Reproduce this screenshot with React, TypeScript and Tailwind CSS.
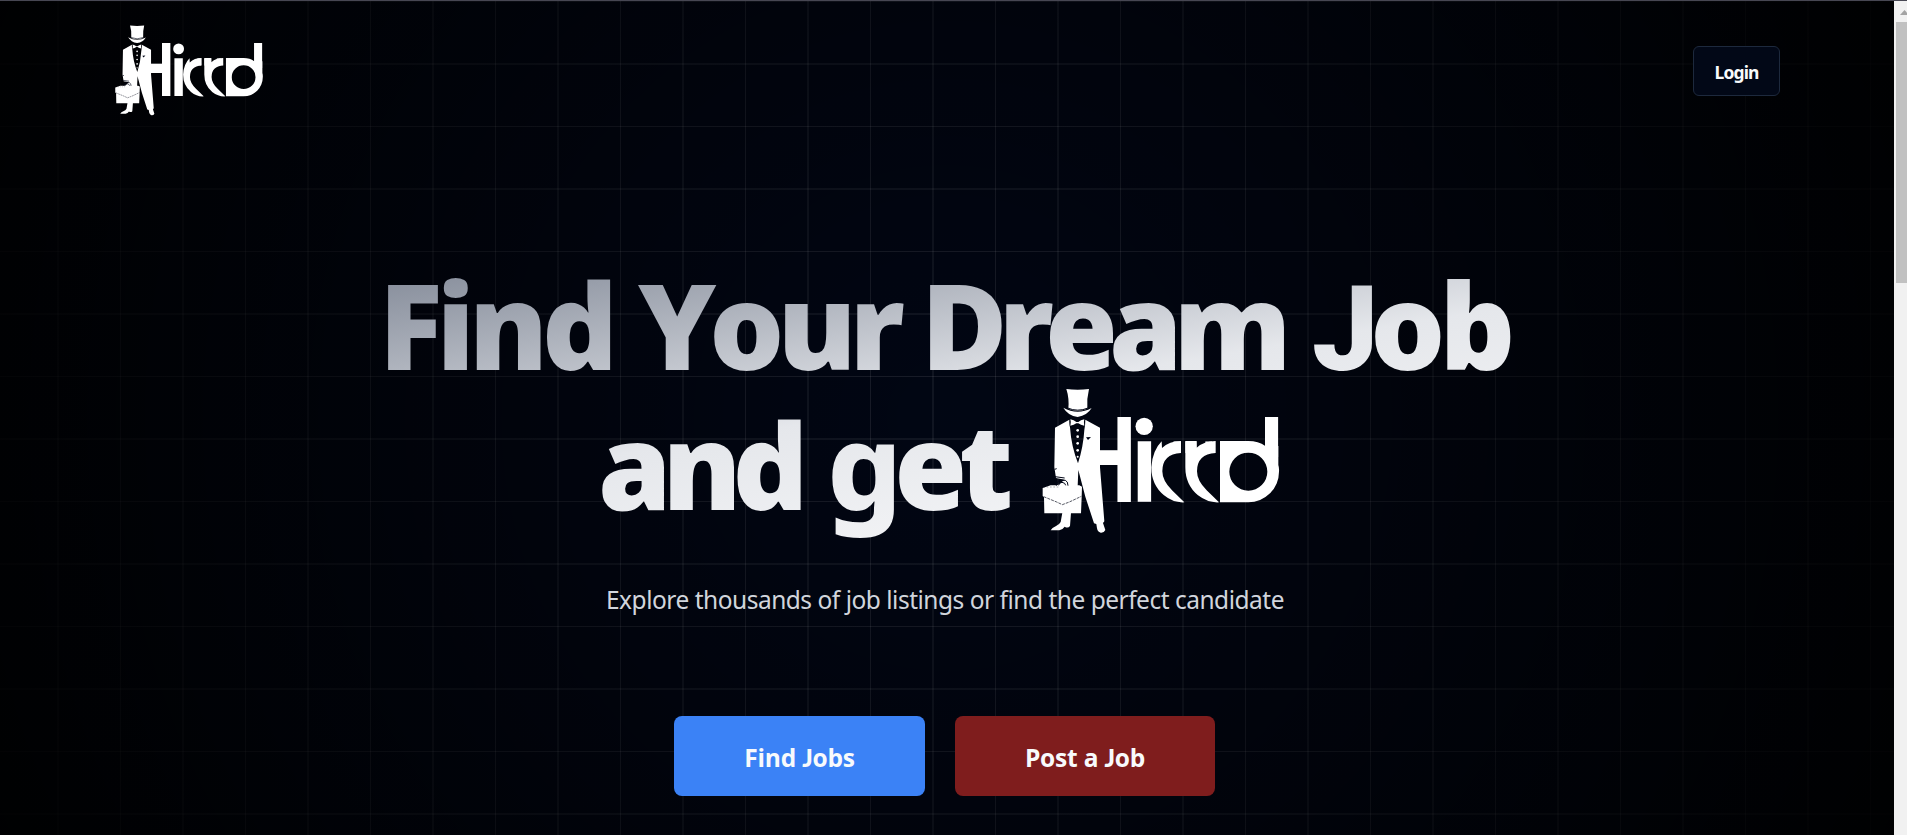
const Mark = ({ id, className }: { id: string; className: string }) => (
  <svg viewBox="0 0 780 495" className={className} fill="#fff" role="img" aria-label="Hirrd">
    <defs>
      <clipPath id={id + "-h"}>
        <rect x="200" y="111" width="120" height="256" />
      </clipPath>
      <clipPath id={id + "-i"}>
        <rect x="315" y="184" width="52" height="183" />
      </clipPath>
      <clipPath id={id + "-r"}>
        <rect x="422" y="184" width="31" height="35" />
        <rect x="466" y="184" width="34" height="36" />
        <rect x="526" y="184" width="31" height="35" />
      </clipPath>
      <clipPath id={id + "-d"}>
        <rect x="705" y="111" width="40" height="120" />
      </clipPath>
    </defs>
    {/* hat */}
    <path d="M109 27 Q143 31 177 27 Q170 55 172 86 Q143 98 115 86 Q118 55 109 27 Z" />
    <path d="M100 83 Q142 107 185 84 Q172 106 143 111 Q114 107 100 83 Z" />
    <path d="M113 84 Q143 97 174 84" fill="none" stroke="#020617" strokeWidth="3" />
    {/* bow tie */}
    <path d="M121 118 Q132 120 139 126 H145 Q152 120 163 118 Q160 127 163 137 Q152 135 145 130 H139 Q132 135 121 137 Q124 127 121 118 Z" />
    {/* suit, arm and legs */}
    <path d="M118 119 Q117 132 120 142 Q124 200 144 250 Q160 200 163 150 Q166 134 166 119 L210 143 V262 L223 424 L219 429 L226 450 Q222 459 212 458 Q203 456 201 445 L199 432 L192 430 L166 350 L145 270 L143 318 H80 L104 299 L78 294 L73 262 L75 143 Z" />
    <circle cx="143" cy="151" r="4" />
    <circle cx="143" cy="170" r="4" />
    <circle cx="143" cy="190" r="4" />
    <circle cx="143" cy="211" r="4" />
    <circle cx="143" cy="230" r="3" />
    <path d="M168 172 L183 171 L174 180 Z" fill="#020617" />
    {/* briefcase */}
    <path d="M97 398 H123 L120 438 Q114 446 104 440 Q98 449 88 451 H62 Q66 443 77 439 Q88 434 92 426 Z" />
    <path d="M38 324 L62 316 H148 L156 320 L155 352 L153 400 H43 L42 352 L38 348 Z" />
    <path d="M79 317 Q80 302 93 301 H106 Q114 304 114 317" fill="none" stroke="#020617" strokeWidth="3" />
    <path d="M86 316 Q87 308 96 307 Q106 308 107 316" fill="none" stroke="#020617" strokeWidth="3" />
    <path d="M75 290 L104 294 M74 268 L80 266" fill="none" stroke="#020617" strokeWidth="3" />
    <path d="M41 350 L80 366 L97 374 L118 366 L154 349" fill="none" stroke="#020617" strokeWidth="2" strokeDasharray="9 3" />
    <path d="M40 321 H90" fill="none" stroke="#020617" strokeWidth="1" strokeDasharray="5 5" />
    {/* wordmark */}
    <g className="font-['Liberation_Sans'] font-bold tracking-normal">
      <g clipPath={`url(#${id}-h)`}>
        <text transform="translate(121 367) scale(.7465 1)" fontSize="372">H</text>
      </g>
      <g clipPath={`url(#${id}-i)`}>
        <text transform="translate(302.7 367) scale(.836 1)" fontSize="348">i</text>
      </g>
      <g clipPath={`url(#${id}-r)`}>
        <text transform="translate(385 367) scale(.5 1)" fontSize="348">r</text>
        <text transform="translate(447 367) scale(.76 1)" fontSize="348">r</text>
      </g>
      <g clipPath={`url(#${id}-d)`}>
        <text transform="translate(587.3 367) scale(.825 1)" fontSize="353">d</text>
      </g>
    </g>
    {/* dot, swooshes and ring */}
    <circle cx="342.5" cy="139" r="26" />
    <path d="M395 184 L396 204 Q418 183 453 183 V219 Q397 222 397 274 Q397 302 426 331 L463 367 Q430 369 402 346 Q364 315 364 262 Q367 212 395 184 Z" />
    <path d="M466 183 H500 V203 Q522 183 557 183 V219 Q501 222 501 274 Q501 302 530 331 L567 367 Q534 369 504 346 Q466 315 466 262 Z" />
    <path fillRule="evenodd" d="M570 183 H655 Q685 183 706 198 H745 V255 Q748 265 747 275 A92 92 0 0 1 655 367 H570 Z M712 275 A57 57 0 1 0 598 275 A57 57 0 1 0 712 275 Z" />
  </svg>
);

/* Capital J that rests on the baseline */
const J = () => <span className="font-[Lato] font-black">J</span>;

export default function App() {
  return (
    <div className="flex h-[835px] w-full flex-col overflow-hidden border-t border-[#474753] bg-black font-['Open_Sans','Noto_Sans',sans-serif] text-slate-50">
      <div className="flex flex-1">
        <main className="flex flex-1 flex-col bg-[#010614] bg-[radial-gradient(circle_1120px_at_50%_50%,#00000008_0%,#000_100%),linear-gradient(90deg,#ffffff18_1px,transparent_1px),linear-gradient(#ffffff18_1px,transparent_1px),linear-gradient(90deg,#ffffff10_2px,transparent_2px),linear-gradient(#ffffff10_2px,transparent_2px)] bg-[position:0_0,-5px_0,0_0,57px_0,0_62px] bg-[size:100%_100%,125px_125px,125px_125px,125px_125px,125px_125px]">
          <header className="flex h-[140px] items-center justify-between pl-[107px] pr-[114px]">
            <Mark id="nav" className="h-[103px] w-[163px]" />
            <button className="h-[50px] w-[87px] rounded-md border border-slate-800 bg-[#020817] pt-0.5 font-['Noto_Sans'] text-[17.5px] font-bold tracking-[-0.9px]">Login</button>
          </header>
          <h1 className="mt-[114px] ml-[72px] h-[290px] w-[1750px] bg-gradient-to-br from-gray-500 via-gray-200 to-white bg-clip-text text-[118px] leading-[140px] font-extrabold tracking-[-6px] whitespace-nowrap text-transparent">
            <span className="flex h-[140px] pl-[307px]">
              <span className="w-[259px]">Find </span>
              <span className="w-[283px] tracking-[-7px]">Your </span>
              <span className="w-[391px] tracking-[-9px]">Dream </span>
              <span className="tracking-[-6px]"><span className="font-[Roboto] font-black tracking-[-8px]">J</span>ob</span>
            </span>
            <span className="flex h-[140px] items-start pl-[526px]">
              <span className="w-[229px] tracking-[-9px]">and </span>
              <span className="w-[203px] tracking-[-8px]"><span className="font-['Noto_Sans']">g</span>et</span>
              <Mark id="hero" className="-mt-[15px] h-[165px] w-[260px] shrink-0" />
            </span>
          </h1>
          <p className="mt-[37px] pr-[4px] text-center font-['Noto_Sans'] text-[24.5px] leading-9 tracking-[-0.49px] text-gray-300">Explore thousands of job listings or find the perfect candidate</p>
          <div className="mt-[98px] flex justify-center gap-[30px] pr-[5px] text-[24.5px] font-bold tracking-[-0.2px]">
            <button className="h-20 w-[251px] rounded-lg bg-[#3b82f6] pt-1">Find <J />obs</button>
            <button className="h-20 w-[260px] rounded-lg bg-[#7f1d1d] pt-1">Post a <J />ob</button>
          </div>
        </main>
        <aside className="flex w-[13px] flex-col items-end overflow-hidden bg-[#f1f1f1]">
          <svg viewBox="0 0 7 21" className="h-[21px] w-[7px]" fill="#a3a3a3">
            <path d="M0 14 L4.5 9 L9 14 Z" />
          </svg>
          <div className="h-[261px] w-[11px] bg-[#c1c1c1]" />
        </aside>
      </div>
    </div>
  );
}
